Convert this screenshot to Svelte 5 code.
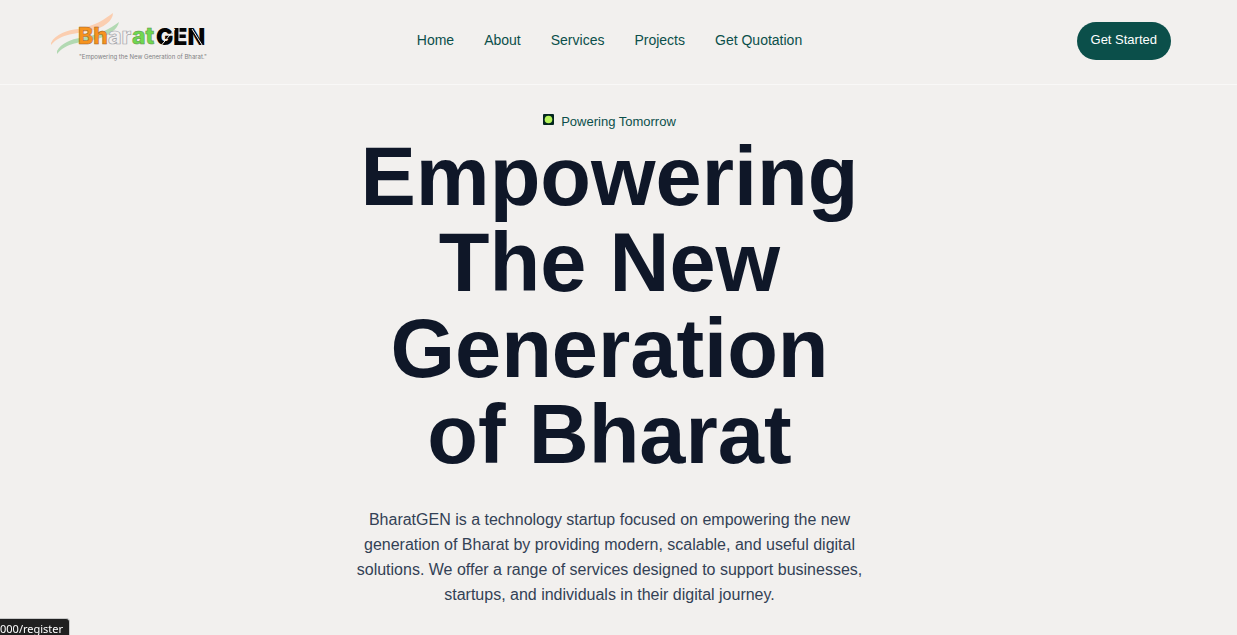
<script>
  const links = ['Home', 'About', 'Services', 'Projects', 'Get Quotation'];
</script>

<div class="page">
  <header>
    <a class="brand" href="#home" aria-label="BharatGEN home">
      <svg width="166" height="54" viewBox="48 10 166 54">
        <path d="M51 43C55 34 68 30 78 29C95 26 105 19 113 13C113 21 103 28 92 30.500C77 34 61 33 51 45Z" fill="#fbceb0" />
        <path d="M57 51C61 43 72 39 80 38C99 35 110 29 119 22C118 29 108 36 97 39C80 43 67 42 57 54Z" fill="#b2d9b2" />
        <g class="word">
          <text x="78" y="44" class="orange">Bh</text>
          <text x="108" y="44" class="white">ar</text>
          <text x="132" y="44" class="green">at</text>
          <text x="156" y="45" class="black">GEN</text>
        </g>
        <path d="M159 48L175 29M179 41V28M192 29L204 48" stroke="#f2f0ee" stroke-width="1" />
        <text x="79" y="59" class="tagline">"Empowering the New Generation of Bharat."</text>
      </svg>
    </a>
    <nav>
      {#each links as link}
        <a href="#{link.toLowerCase().replace(' ', '-')}">{link}</a>
      {/each}
    </nav>
    <div class="action"><button type="button">Get Started</button></div>
  </header>

  <main>
    <p class="eyebrow">
      <svg width="11" height="11" viewBox="0 0 11 11" aria-hidden="true">
        <rect width="11" height="11" rx="1" fill="#03261f" />
        <circle cx="5.5" cy="5.5" r="3.8" fill="#b6f35c" />
      </svg>
      <span>Powering Tomorrow</span>
    </p>
    <h1>Empowering<br />The New<br />Generation<br />of Bharat</h1>
    <p class="lead">
      BharatGEN is a technology startup focused on empowering the new generation of Bharat by
      providing modern, scalable, and useful digital solutions. We offer a range of services
      designed to support businesses, startups, and individuals in their digital journey.
    </p>
  </main>

  <div class="status"><span>000/register</span></div>
</div>

<style>
  :global(body) {
    margin: 0;
    background: #f2f0ee;
  }
  .page {
    min-height: 100vh;
    overflow: hidden;
    font-family: Arial, 'Liberation Sans', sans-serif;
    color: #0b4f4a;
  }
  header {
    display: grid;
    grid-template-columns: 1fr auto 1fr;
    align-items: start;
    padding: 10px 66px 10px 48px;
    min-height: 64px;
    border-bottom: 1px solid #f9f8f7;
  }
  .brand {
    display: block;
    height: 54px;
  }
  .brand svg {
    display: block;
  }
  .word {
    font-family: Inter, sans-serif;
    font-weight: 800;
    font-size: 23px;
  }
  .orange {
    fill: #f7931e;
    stroke: #9a6228;
    stroke-width: 0.5px;
  }
  .white {
    fill: #f2f0f0;
    stroke: #a3a3a8;
    stroke-width: 0.7px;
  }
  .green {
    fill: #70d850;
    stroke: #5b8f4c;
    stroke-width: 0.5px;
  }
  .black {
    fill: #050505;
    font-weight: 900;
  }
  .tagline {
    font-family: Inter, sans-serif;
    font-size: 6px;
    fill: #808083;
  }
  nav {
    display: flex;
    gap: 30px;
    padding-top: 20px;
  }
  nav a {
    color: inherit;
    text-decoration: none;
    font-size: 14px;
    line-height: 20px;
  }
  .action {
    display: flex;
    justify-content: flex-end;
    padding-top: 12px;
  }
  button {
    border: 0;
    border-radius: 19px;
    background: #0b4f4a;
    color: #fff;
    font-family: inherit;
    font-size: 13px;
    line-height: 18px;
    padding: 9px 14px 11px;
  }
  main {
    display: flex;
    flex-direction: column;
    align-items: center;
    padding: 27px 18px 28px 0;
    text-align: center;
  }
  .eyebrow {
    display: flex;
    gap: 7px;
    margin: 0;
    font-size: 13px;
    line-height: 20px;
  }
  .eyebrow svg {
    margin-top: 2px;
  }
  h1 {
    margin: 2px 0 0;
    color: #0f1728;
    font-size: 83px;
    line-height: 86px;
    font-weight: 700;
  }
  .lead {
    max-width: 520px;
    margin: 29px 0 0;
    color: #334155;
    font-size: 16px;
    line-height: 25px;
  }
  .status {
    position: fixed;
    left: 0;
    bottom: 0;
    padding-right: 6px;
    background: #202020;
    color: #fff;
    border-top: 1px solid #c8c8c8;
    border-right: 1px solid #c8c8c8;
    border-top-right-radius: 4px;
    font-family: 'Noto Sans', sans-serif;
    font-size: 11px;
    line-height: 16px;
  }
  .status span {
    display: block;
    margin-top: 2px;
    margin-bottom: -2px;
  }
</style>
